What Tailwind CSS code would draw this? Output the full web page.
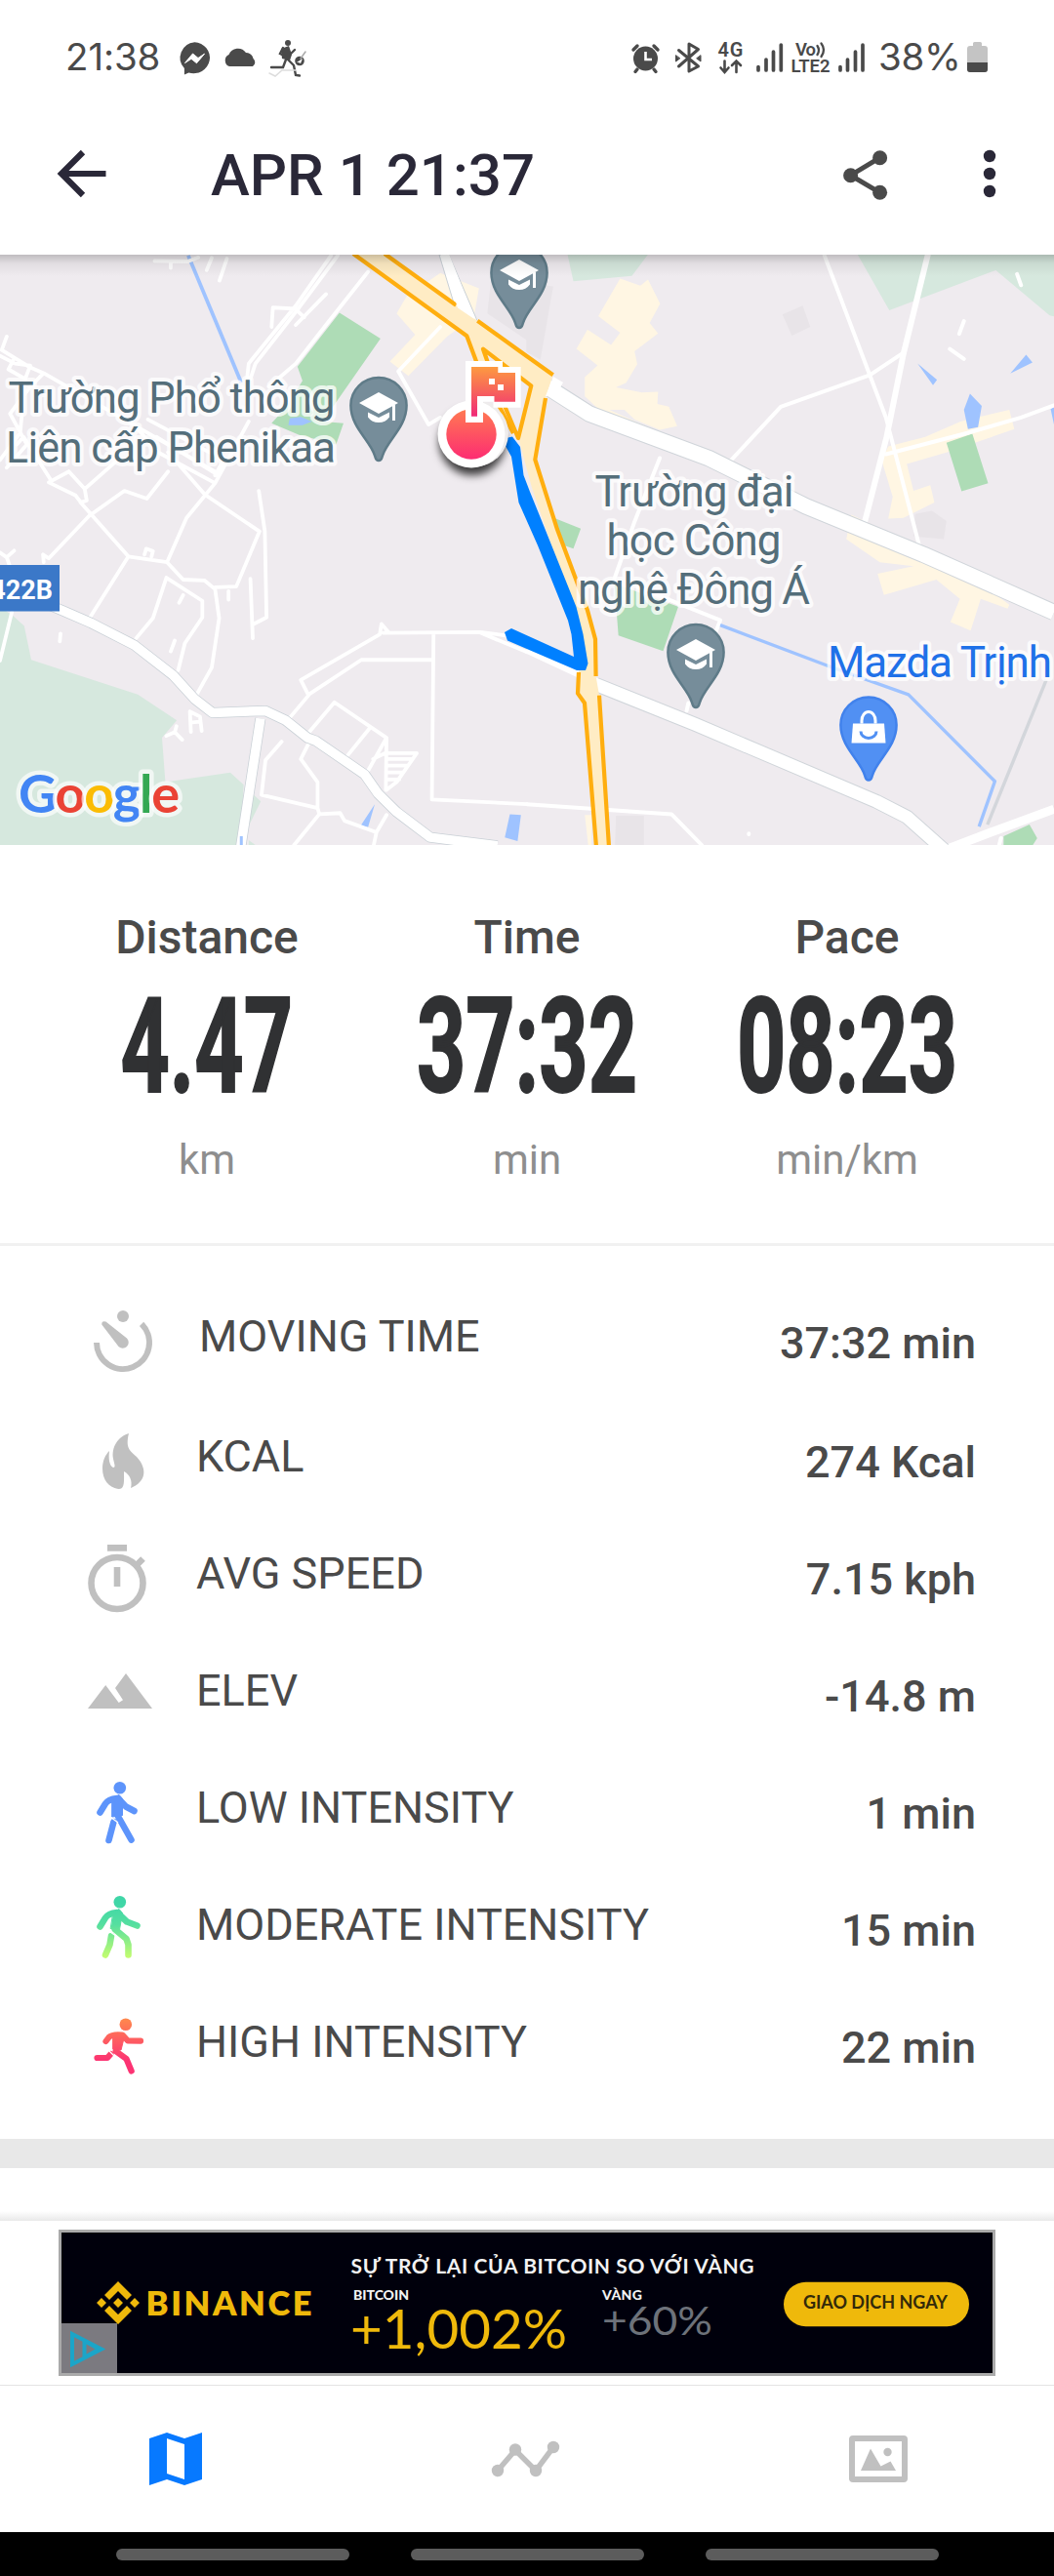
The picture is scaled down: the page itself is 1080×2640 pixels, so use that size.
<!DOCTYPE html>
<html lang="vi">
<head>
<meta charset="utf-8">
<title>APR 1 21:37</title>
<script src="https://cdn.jsdelivr.net/npm/@tailwindcss/browser@4"></script>
</head>
<body class="w-[1080px] h-[2640px] bg-white overflow-hidden flex flex-col font-['Roboto',sans-serif] text-[#4a4a4a]">

<!-- Status bar -->
<header class="h-[116px] shrink-0 flex items-start justify-between pl-[67px] pr-[68px]">
  <div class="flex items-start">
    <span class="w-[107px] pt-[34px] text-[38.5px] leading-[48px] tracking-[-0.1px] font-['Inter',sans-serif] whitespace-nowrap">21:38</span>
    <svg class="w-[150px] h-[116px]" viewBox="174 0 150 116">
      <g fill="#4a4a4a">
        <path d="M199.400 43.200a16.500 16 0 1 1-6 31.200l-4.500 2v-6.500a16.500 16 0 0 1 10.500-26.700z"/>
        <path d="M189.500 64.500l8-9.500 5.500 4.500 6.500-4.300-8 9.500-5.500-4.400z" fill="#fff" stroke="#fff" stroke-width="1"/>
        <path d="M235 68a6.500 6.500 0 0 1-.5-12 10 10 0 0 1 17.500-2 8 8 0 0 1 7.500 6 5 5 0 0 1-.5 8z"/>
        <circle cx="295" cy="44" r="3"/>
        <path d="M288 50l8-3 3 9-2 6-8-2z"/>
        <circle cx="307" cy="62.500" r="4.800"/>
        <path d="M304 64l6-4-2 5-2-1z" fill="#fff"/>
      </g>
      <g fill="none" stroke="#4a4a4a" stroke-width="2.400" stroke-linecap="round">
        <path d="M290 49l-3 6 6 3M298 55l4-4M293 61l-3 8-12 0M295 61l6 6 2 10 4 .5"/>
        <path d="M276 75l6 3 7-6h14" stroke="#ddd" stroke-width="1.500"/>
        <path d="M308 60l5-7" stroke="#aaa" stroke-width="1.500"/>
      </g>
    </svg>
  </div>
  <div class="flex items-start">
    <svg class="w-[254px] h-[116px]" viewBox="644 0 254 116">
      <g stroke="#4a4a4a" fill="none" stroke-width="3.400" stroke-linecap="round">
        <circle cx="661.500" cy="60" r="12.500" fill="#4a4a4a" stroke="none"/>
        <path d="M649 51l4-4M674 51l-4-4M653 71l-2 2.500M670 71l2 2.500"/>
        <path d="M661.500 53v8h6.500" stroke="#fff" stroke-width="2.600" stroke-linecap="butt"/>
        <path d="M695.500 51.500l20 16.500-9.500 5V45l9.500 5.500-20 17.500" stroke-linejoin="round" stroke-width="3"/>
        <path d="M692.500 57v6l4-3zM718 57v6l-4-3z" fill="#4a4a4a" stroke-width="1"/>
        <path d="M742.500 62.500v11m-4-4l4 4.500 4-4.500M754.500 74v-11m-4.500 4l4.500-4.500 4.500 4.500" stroke-width="2.600"/>
        <path d="M777 68.500v3.500M785 61v11M792.500 53v19M800.300 46v26" stroke-width="3.700"/>
        <path d="M861 68.500v3.500M868.500 61v11M876.500 53v19M884 46v26" stroke-width="3.700"/>
        <path d="M837.500 47q3 4.500 0 9M841.500 44.500q5 6.500 0 13.500" stroke-width="2.300"/>
      </g>
      <g fill="#4a4a4a" font-family="Roboto" font-weight="600" font-size="20">
        <text x="735.500" y="57.500" textLength="26">4G</text>
        <text x="815" y="57" font-size="18.500" textLength="21">Vo</text>
        <text x="810.500" y="74" font-size="18.500" textLength="40">LTE2</text>
      </g>
    </svg>
    <span class="w-[93px] pl-[2px] pt-[34px] text-[38.5px] leading-[48px] tracking-[-0.3px] font-['Inter',sans-serif] whitespace-nowrap">38%</span>
    <svg class="w-[21px] h-[31px] mt-[43px]" viewBox="0 0 21 31">
      <path d="M6 1.500Q6 0 7.500 0h6Q15 0 15 1.500V4h3q3 0 3 3v21q0 3-3 3H3q-3 0-3-3V7q0-3 3-3h3z" fill="#c4c4c4"/>
      <path d="M0 21h21v7q0 3-3 3H3q-3 0-3-3z" fill="#4a4a4a"/>
    </svg>
  </div>
</header>

<!-- App bar -->
<nav class="h-[145px] shrink-0 flex items-start bg-white">
  <svg class="w-[216px] h-[145px]" viewBox="0 116 216 145"><path d="M108.500 178H65M85 156l-22 22 22 22" fill="none" stroke="#2a2838" stroke-width="6.200"/></svg>
  <h1 class="w-[624px] pt-[28px] text-[60px] leading-[72px] font-medium text-[#2a2838] whitespace-nowrap">APR 1 21:37</h1>
  <svg class="w-[240px] h-[145px]" viewBox="840 116 240 145">
    <path d="M901.600 161.700l-30 18 30 17.600" fill="none" stroke="#4a4a4a" stroke-width="5"/>
    <g fill="#4a4a4a"><circle cx="871.600" cy="179.700" r="7.500"/><circle cx="901.600" cy="161.700" r="7.500"/><circle cx="901.600" cy="197.300" r="7.500"/></g>
    <g fill="#2a2838"><circle cx="1014" cy="160" r="6.200"/><circle cx="1014" cy="178" r="6.200"/><circle cx="1014" cy="196" r="6.200"/></g>
  </svg>
</nav>

<!-- Route map -->
<svg class="w-[1080px] h-[605px] shrink-0 block" viewBox="0 261 1080 605">
  <defs>
    <linearGradient id="shade" x1="0" y1="0" x2="0" y2="1"><stop offset="0" stop-color="#000" stop-opacity=".2"/><stop offset=".4" stop-color="#000" stop-opacity=".06"/><stop offset="1" stop-color="#000" stop-opacity="0"/></linearGradient>
    <linearGradient id="mark" x1="0" y1="0" x2="0" y2="1"><stop offset="0" stop-color="#ff7a52"/><stop offset="1" stop-color="#fd2c72"/></linearGradient>
    <linearGradient id="flag" x1="0" y1="0" x2="0" y2="1"><stop offset="0" stop-color="#fd9a40"/><stop offset="1" stop-color="#f02a78"/></linearGradient>
    <filter id="drop" x="-50%" y="-50%" width="200%" height="200%"><feGaussianBlur stdDeviation="4"/></filter>
    <path id="pin" d="M0 42C-3 42-3 39.500-4 37C-8 22-28.600 8-28.600-14.500A28.600 28.600 0 0 1 28.600-14.500C28.600 8 8 22 4 37C3 39.500 3 42 0 42z" stroke-width="2.500"/>
    <g id="cap" fill="#fff">
      <path d="M-20-17L0-28 20-17 0-6z"/><path d="M-11-7.500L0-2 11-7.500V-2.500Q7 3 0 3T-11-2.500z"/><path d="M14-15h3V1h-3z"/>
    </g>
  </defs>
  <rect y="261" width="1080" height="605" fill="#efebef"/>

  <!-- western half -->
  <g transform="translate(0 250) scale(.34439 .39541)" fill="none" stroke-linejoin="round">
    <g fill="#d6e8de">
      <path d="M0 940L40 965L72 990L93 1078L410 1168L526 1235L482 1280L492 1395L685 1370L725 1402L715 1558H0z"/>
      <path d="M745 1420L776 1445L742 1505zM740 1545l20 13h-20z"/>
    </g>
    <g fill="#aedcb6">
      <path d="M1010 178L1132 245L960 460L1022 465L1000 520L890 495L808 465L850 425L900 355L885 318z"/>
    </g>
    <path d="M858 470L862 452L895 448L928 460L900 470z" fill="#9fc3ff"/>
    <path d="M1210 135L1310 75L1425 115L1410 190L1330 240L1215 342L1160 305L1235 235L1180 180z" fill="#fff6e3"/>
    <path d="M1460 100L1568 110V250L1450 180z" fill="#e8e4e8"/>
    <path d="M1517 1478L1550 1480L1540 1548L1502 1538zM1073 1508L1115 1452L1095 1512z" fill="#9fc3ff"/>
    <path d="M560 30L718 360" stroke="#9fc3ff" vector-effect="non-scaling-stroke" stroke-width="3.800"/>
    <g stroke="#fff" stroke-width="3.800" stroke-linecap="round">
      <path vector-effect="non-scaling-stroke" d="M460 44L560 45L590 35M508 46v16M630 36L615 68M675 38L653 95M985 30L880 160L740 310L735 350M1005 30L890 165L760 310L745 350M1095 72L970 210L880 310L800 370M970 130L880 210M808 215L812 165L878 168L905 190M1310 215L1185 330L1275 468L1310 450"/>
      <path vector-effect="non-scaling-stroke" d="M20 240L5 275L90 320L130 335L400 470L640 590M0 290L45 310L90 315L75 350L25 325L40 300M130 335L90 370L30 440L80 520L20 580M75 350L60 490L0 560M440 455L665 560L640 600M400 470L470 540L640 620M465 500L650 600M500 540L610 650L772 745M50 520L70 500L150 610M205 590L145 618L225 652L245 675M205 590L252 635L258 665L240 670M252 635L350 560M500 590L437 660L370 640L265 705L145 815L128 805L130 825M240 670L382 810L270 965M770 640L788 745L793 968L755 985M745 868L752 1022M772 745L703 888L640 890M740 460L640 620L555 710L497 825L382 810M430 805l5-15 20 6-4 14M497 825L545 870L608 872L640 895L652 970L630 1098L585 1168M405 1022L455 970L495 865L602 925V968L550 1035L530 1105M545 910l-12 20M680 900v22M180 1010l-2 20M520 1028l-12 28M35 955L0 1080M0 800L20 812L42 795M20 812L35 850"/>
      <path vector-effect="non-scaling-stroke" d="M865 1225L918 1170L895 1130L1130 1012L1135 985L1155 1005M918 1168L1075 1078H1285M1140 1008L1430 1006L1505 1015M1430 1008L1568 1058M1290 1010L1285 1440L1568 1452M920 1265L995 1188L1150 1280L1148 1415M1150 1280L1092 1370M1100 1255L1035 1325M1110 1335L1145 1320L1240 1320L1180 1395L1150 1415M1150 1335H1225M1150 1352H1212M1150 1370H1200M1150 1388H1188M838 1290L790 1338L778 1428L945 1462V1395L895 1335L918 1295M945 1462L950 1478L875 1558M950 1478L1012 1475L1025 1495L1120 1525L1150 1480M1120 1525L1112 1558M565 1212L568 1265M565 1212L595 1225L600 1262M572 1240L595 1238M495 1275L520 1265L525 1250M520 1265L542 1285"/>
    </g>
    <path stroke="#c9d0d6" vector-effect="non-scaling-stroke" stroke-width="11" d="M130 930L185 950L270 982L400 1040L515 1118L580 1180L632 1215L790 1210L850 1235L915 1280L940 1288L1085 1375L1125 1425L1180 1472L1280 1538L1480 1560M775 1230L715 1570"/>
    <path stroke="#fff" vector-effect="non-scaling-stroke" stroke-width="9.500" d="M130 930L185 950L270 982L400 1040L515 1118L580 1180L632 1215L790 1210L850 1235L915 1280L940 1288L1085 1375L1125 1425L1180 1472L1280 1538L1480 1560M775 1230L715 1570"/>
    <path vector-effect="non-scaling-stroke" d="M718 1535v23" stroke="#9fc3ff" stroke-width="3"/>
  </g>

  <!-- eastern half -->
  <g transform="translate(540 250) scale(.34439 .39541)" fill="none" stroke-linejoin="round">
    <g fill="#d6e8de"><path d="M120 25H362L312 83L138 97zM982 25H1568V188L1555 185L1395 68L1078 172z"/></g>
    <g fill="#fff6e3">
      <path d="M277 90L337 108L360 92L396 155L365 205L390 232L320 278L328 312L295 360L265 372L342 385L390 383L388 415L422 422L447 472L395 482L320 455L290 430L245 430L378 482L372 488L215 430L172 395V345L210 315L147 272L180 222L250 262L277 230L212 187z"/>
      <path d="M1075 525L1185 500L1290 460L1435 430L1450 480L1250 540L1130 570L1150 640L1200 625L1212 670L1120 710L1075 712L1088 655L1055 560zM965 702L1045 735L1150 790L1300 850L1435 935L1430 945L1350 920L1320 1002L1260 980L1288 920L1218 870L1062 910L1043 855L1150 835L1050 825L950 765z"/>
      <path d="M172 1480h20v78h-10z"/>
    </g>
    <g fill="#e8e4e8"><path d="M760 183L820 160L843 215L788 238zM1155 700L1205 692L1248 718L1240 765L1150 758zM265 1482H348V1558H262zM-2 100L78 110L40 300L-2 280z"/></g>
    <g fill="#aedcb6"><path d="M1248 515L1325 492L1372 620L1293 641zM80 710L160 738L138 790L100 778zM260 880L450 940L405 1055L272 1015zM1418 1535L1495 1505L1518 1540L1505 1558H1418z"/></g>
    <g fill="#9fc3ff"><path d="M1318 388L1353 420L1342 475L1312 480L1300 430zM1162 310L1220 352L1208 366zM1438 336L1485 287L1504 307zM1558 428l10-5v45z"/></g>
    <g stroke="#fff" stroke-linecap="round">
      <path vector-effect="non-scaling-stroke" stroke-width="4" d="M885 30L1020 340L1068 450L1168 785M1115 285L1020 340L755 422L595 572M1068 545L1310 490L1470 450L1568 418M395 555L320 720L255 880M330 890L575 975L560 1010M480 1190L475 1210M0 1452L430 1478L520 1558M1458 78L1470 107M1300 200L1286 233M1258 272L1300 298M1410 1540l-5 18M660 1528v2"/>
      <path vector-effect="non-scaling-stroke" stroke-width="6" d="M1192 30L1120 285L1070 500L1005 720"/>
    </g>
    <path vector-effect="non-scaling-stroke" d="M575 988L900 1095L1135 1168L1392 1393L1345 1510" stroke="#9fc3ff" stroke-width="3.400"/>
    <path vector-effect="non-scaling-stroke" d="M1545 1130L1370 1505" stroke="#d3d6db" stroke-width="3.400"/>
    <path vector-effect="non-scaling-stroke" d="M60 370L185 440L540 555L830 680L1180 805L1568 955" stroke="#d0d5da" stroke-width="17.500"/>
    <path vector-effect="non-scaling-stroke" d="M1568 1465L1380 1525L1230 1575" stroke="#fff" stroke-width="9"/>
    <path vector-effect="non-scaling-stroke" d="M205 1142L500 1245L1040 1445L1130 1485L1240 1570" stroke="#d0d5da" stroke-width="15"/>
    <path vector-effect="non-scaling-stroke" d="M55 368L185 440L540 555L830 680L1180 805L1568 955" stroke="#fff" stroke-width="15.500"/>
    <path vector-effect="non-scaling-stroke" d="M195 1138L500 1245L1040 1445L1130 1485L1240 1570" stroke="#fff" stroke-width="13"/>
    <path vector-effect="non-scaling-stroke" d="M0 1050L160 1115" stroke="#fff" stroke-width="9"/>
  </g>

  <!-- highway -->
  <path d="M450 261h10L490 331L466 314z" fill="#fff" stroke="#c9d0d6" stroke-width="1"/>
  <g stroke-linejoin="round">
    <path d="M363 261L478.300 344.300L489 373L530 444L545 500L593 640L593 689L592 710.600L599 720.500L611 868H624L614 712.600L610.600 693L610 655L602 625.600L571 542.600L548.300 471L559 408L566.700 384.300L531.700 359.300L489.300 328.700L467.300 312.700L395 261z" fill="#ffecc4"/>
    <path d="M362 260L478.300 344.300L489 373L526 444M394 260L467.300 312.700M489.300 328.700L531.700 359.300L566.700 384.300M559 408L548.300 471L571 542.600L602 625.600L610 655L610.600 693M614 712.600L624 868M593 689L592 710.600L599 720.500L611 868" fill="none" stroke="#ffae0f" stroke-width="4.200"/>
    <path d="M495 357.700L544.300 395.300L531 449L507 392z" fill="#efebef" stroke="#ffae0f" stroke-width="4.200"/>
    <path d="M451.500 261h9L486 327L469 315.500z" fill="#fff"/>
    <path d="M559 406l8-20 10 6-8 14z" fill="#fff"/>
  </g>

  <path d="M514 450L525 447.500L533 458L536.500 487L543 504L558 541L590.500 622L597.500 650L602.500 680L600 687H591L520 656.500L517 648L524 644L588 673L585.500 650L582 636L551 559L531.500 515L524 468z" fill="#0080ff"/>

  <!-- place pins -->
  <g transform="translate(388 430)"><use href="#pin" fill="#768d9a" stroke="#5f7b88"/><use href="#cap"/></g>
  <g transform="translate(532 294)"><use href="#pin" fill="#768d9a" stroke="#5f7b88"/><use href="#cap"/></g>
  <g transform="translate(713 683)"><use href="#pin" fill="#768d9a" stroke="#5f7b88"/><use href="#cap"/></g>
  <g transform="translate(890 757.500)"><use href="#pin" fill="#5190f3" stroke="#4182ec"/>
    <path d="M-16-16h32l1.500 20h-35z" fill="#fff"/><path d="M-7-16v-3a7 9 0 0 1 14 0v3" fill="none" stroke="#fff" stroke-width="3"/><path d="M-8-8a8 7 0 0 0 16 0" fill="none" stroke="#5190f3" stroke-width="3"/>
  </g>

  <!-- labels -->
  <g font-family="Roboto" font-size="44" fill="#546e7a" stroke="#fff" stroke-opacity=".75" stroke-width="8" stroke-linejoin="round" paint-order="stroke">
    <text x="8.500" y="423" textLength="335">Trường Phổ thông</text>
    <text x="6" y="474" textLength="338">Liên cấp Phenikaa</text>
    <text x="609.500" y="519" textLength="204">Trường đại</text>
    <text x="621.500" y="569" textLength="179">học Công</text>
    <text x="592" y="619" textLength="238">nghệ Đông Á</text>
    <text x="848" y="694" textLength="230" fill="#1f71e8">Mazda Trịnh</text>
  </g>
  <rect x="-10" y="579" width="71" height="47.500" fill="#3b78c8"/>
  <text x="54" y="614" text-anchor="end" font-family="Roboto" font-weight="700" font-size="27" fill="#fff">422B</text>
  <text x="19" y="832.500" textLength="165" font-family="Lato" font-weight="700" font-size="54" stroke="#fff" stroke-opacity=".65" stroke-width="9" stroke-linejoin="round" paint-order="stroke"><tspan fill="#4285f4">G</tspan><tspan fill="#ea4335">o</tspan><tspan fill="#fbbc05">o</tspan><tspan fill="#4285f4">g</tspan><tspan fill="#34a853">l</tspan><tspan fill="#ea4335">e</tspan></text>

  <!-- start / finish marker -->
  <circle cx="484" cy="453" r="34" fill="#000" fill-opacity=".75" filter="url(#drop)"/>
  <circle cx="487" cy="444" r="34" fill="#eeecec"/>
  <circle cx="483" cy="445" r="34.500" fill="#fff"/>
  <circle cx="483" cy="445" r="25.700" fill="url(#mark)"/>
  <path d="M477 370h38v6h18.700v41.700H505.500v-6H495v21.300h-18z" fill="#fff"/>
  <path d="M483 376h27.300v6H528v29.700h-21.500v-5.700H489v20.700h-6z" fill="url(#flag)"/>
  <path d="M501 388h6v6h-6zM510 394h6v6h-6z" fill="#fff"/>
  <rect y="261" width="1080" height="22" fill="url(#shade)"/>
</svg>

<!-- Headline stats -->
<section class="h-[411px] shrink-0 border-b-[3px] border-[#f1f1f1] px-[48px] grid grid-cols-3 text-center">
  <div class="flex flex-col items-center pt-[67px]">
    <h2 class="text-[48px] leading-[56px] font-medium">Distance</h2>
    <p class="mt-[24px] h-[120px] text-[135px] leading-[120px] font-bold text-[#303133] scale-x-[.65] whitespace-nowrap [-webkit-text-stroke:2px_#303133]">4.47</p>
    <p class="mt-[31px] text-[42px] leading-[50px] text-[#8e8e8e]">km</p>
  </div>
  <div class="flex flex-col items-center pt-[67px]">
    <h2 class="text-[48px] leading-[56px] font-medium">Time</h2>
    <p class="mt-[24px] h-[120px] text-[135px] leading-[120px] font-bold text-[#303133] scale-x-[.65] whitespace-nowrap [-webkit-text-stroke:2px_#303133]">37:32</p>
    <p class="mt-[31px] text-[42px] leading-[50px] text-[#8e8e8e]">min</p>
  </div>
  <div class="flex flex-col items-center pt-[67px]">
    <h2 class="text-[48px] leading-[56px] font-medium">Pace</h2>
    <p class="mt-[24px] h-[120px] text-[135px] leading-[120px] font-bold text-[#303133] scale-x-[.65] whitespace-nowrap [-webkit-text-stroke:2px_#303133]">08:23</p>
    <p class="mt-[31px] text-[42px] leading-[50px] text-[#8e8e8e]">min/km</p>
  </div>
</section>

<!-- Detail rows -->
<section class="h-[915px] shrink-0 pt-[46px] pl-[84px] pr-[80px] text-[45px] leading-[60px]">
  <div class="h-[123px] flex items-start">
    <svg class="w-[84px] h-[120px]" viewBox="84 1323 84 120"><path d="M99 1376a27 27 0 1 0 46.100-19.100" fill="none" stroke="#c0c0c0" stroke-width="6"/><circle cx="126" cy="1349" r="6" fill="#c0c0c0"/><path d="M104.300 1357.500Q104 1353 108.500 1354.500L130 1371.500A6 6 0 0 1 121.500 1380z" fill="#c0c0c0"/></svg>
    <span class="pt-[17px] pl-[36px] flex-1">MOVING TIME</span><span class="pt-[24px] font-medium">37:32 min</span>
  </div>
  <div class="h-[120px] flex items-start">
    <svg class="w-[84px] h-[120px]" viewBox="84 1446 84 120"><path d="M132 1469C128 1485 134 1487 140 1493C152 1506 149 1519 134 1525C136 1518 133 1511 127 1508C127 1517 128 1526 122 1526C111 1525 105 1516 105 1505C105 1497 108 1491 112 1487C111 1495 112 1502 116 1504C119 1504 117 1500 116 1495C114 1483 121 1472 132 1469z" fill="#c0c0c0"/></svg>
    <span class="pt-[17px] pl-[33px] flex-1">KCAL</span><span class="pt-[23px] font-medium">274 Kcal</span>
  </div>
  <div class="h-[120px] flex items-start">
    <svg class="w-[84px] h-[120px]" viewBox="84 1566 84 120"><g fill="none" stroke="#c0c0c0" stroke-width="6.600"><circle cx="120" cy="1622.500" r="26.500"/><path d="M110 1586.400h20M120 1606v20M139 1605l7.500-7.500"/></g></svg>
    <span class="pt-[17px] pl-[33px] flex-1">AVG SPEED</span><span class="pt-[23px] font-medium">7.15 kph</span>
  </div>
  <div class="h-[120px] flex items-start">
    <svg class="w-[84px] h-[120px]" viewBox="84 1686 84 120"><path d="M90 1751L108.200 1727L121.700 1745L126 1742.300L118 1730L129 1715L156 1751z" fill="#c0c0c0"/></svg>
    <span class="pt-[17px] pl-[33px] flex-1">ELEV</span><span class="pt-[23px] font-medium">-14.8 m</span>
  </div>
  <div class="h-[120px] flex items-start">
    <svg class="w-[84px] h-[120px]" viewBox="84 1806 84 120"><g fill="none" stroke="#5d94fb" stroke-width="6.600" stroke-linecap="round" stroke-linejoin="round"><circle cx="122.800" cy="1832.200" r="6.300" fill="#5d94fb" stroke="none"/><path d="M115 1844l7-4.500 3.500 4v17L115 1862z" fill="#5d94fb" stroke-width="1"/><path d="M120 1843q-9 1-12 5.500l-5.500 9M121 1843l8 8.500 8.500 4.500M120.500 1846l.5 15.500 13.500 24"/><path d="M116.500 1867l-5 19"/></g><path d="M113 1862l8 6" stroke="#fff" stroke-width="1.300"/></svg>
    <span class="pt-[17px] pl-[33px] flex-1">LOW INTENSITY</span><span class="pt-[23px] font-medium">1 min</span>
  </div>
  <div class="h-[120px] flex items-start">
    <svg class="w-[84px] h-[120px]" viewBox="84 1926 84 120"><defs><linearGradient id="mod" gradientUnits="userSpaceOnUse" x1="0" y1="1950" x2="0" y2="2006"><stop offset="0" stop-color="#3fd6a7"/><stop offset=".4" stop-color="#55dfa0"/><stop offset="1" stop-color="#c3fc6f"/></linearGradient></defs><g fill="none" stroke="url(#mod)" stroke-width="6.600" stroke-linecap="round" stroke-linejoin="round"><circle cx="122.800" cy="1949.200" r="6.300" fill="url(#mod)" stroke="none"/><path d="M116 1961l6-4.500 3.500 4-3 17-9-1z" fill="url(#mod)" stroke-width="1"/><path d="M120 1960q-9 1-12 5.500l-5.500 9M121 1961l9 8.500 10.500 4M120.500 1963l-3 14 12 10 2 6v10.500"/><path d="M114 1984l-1.500 9-4.500 10.500"/></g><path d="M110 1978l9 6" stroke="#fff" stroke-width="1.300"/></svg>
    <span class="pt-[17px] pl-[33px] flex-1">MODERATE INTENSITY</span><span class="pt-[23px] font-medium">15 min</span>
  </div>
  <div class="h-[120px] flex items-start">
    <svg class="w-[84px] h-[120px]" viewBox="84 2046 84 120"><defs><linearGradient id="high" gradientUnits="userSpaceOnUse" x1="0" y1="2068" x2="0" y2="2112"><stop offset="0" stop-color="#ff8a4c"/><stop offset="1" stop-color="#fc3373"/></linearGradient></defs><g fill="none" stroke="url(#high)" stroke-width="6.200" stroke-linecap="round" stroke-linejoin="round"><circle cx="128.800" cy="2074.700" r="6.300" fill="url(#high)" stroke="none"/><path d="M116 2084l12 1-4 16-8-1z" fill="url(#high)" stroke-width="1"/><path d="M125 2085.500q-10-1-13.500 2.500l-3 4M126 2086l5 5.500 13 .200M124 2088l-5.500 14 11 8 5.200 12.500"/><path d="M113.500 2105l-3.500 4H99.500"/></g><path d="M111 2101l7 7" stroke="#fff" stroke-width="1.300"/></svg>
    <span class="pt-[17px] pl-[33px] flex-1">HIGH INTENSITY</span><span class="pt-[23px] font-medium">22 min</span>
  </div>
</section>

<div class="h-[30px] shrink-0 bg-[#e8e8e8]"></div>
<div class="h-[54px] shrink-0 flex items-end"><div class="h-[10px] w-full bg-linear-to-b from-white to-[#e9e9e9]"></div></div>

<!-- Ad banner -->
<aside class="h-[168px] shrink-0 px-[60px] pt-[9px]">
  <svg class="w-[960px] h-[150px]" viewBox="60 2285 960 150" font-family="Lato">
    <rect x="60" y="2285" width="960" height="150" fill="#aaa"/>
    <rect x="63" y="2288" width="954" height="144" fill="#00000c"/>
    <g fill="#efb90b">
      <path d="M121 2338l14 14-5 5-9-9-9 9-5-5zM121 2382l14-14-5-5-9 9-9-9-5 5zM121 2355l5 5-5 5-5-5zM104 2355l5 5-5 5-5-5zM138 2355l5 5-5 5-5-5z"/>
      <text x="149.500" y="2372.500" font-size="34.500" font-weight="800" textLength="170">BINANCE</text>
      <text x="359" y="2407" font-size="56" font-weight="400" textLength="222" lengthAdjust="spacingAndGlyphs">+1,002%</text>
    </g>
    <g fill="#f2f2f2" font-weight="700">
      <text x="359.500" y="2330" font-size="21" textLength="413">SỰ TRỞ LẠI CỦA BITCOIN SO VỚI VÀNG</text>
      <text x="362" y="2357" font-size="14" font-weight="900" textLength="57">BITCOIN</text>
      <text x="617" y="2357" font-size="14" font-weight="900" textLength="41">VÀNG</text>
    </g>
    <text x="617" y="2393" font-size="41.500" font-weight="400" fill="#6d727a" textLength="113" lengthAdjust="spacingAndGlyphs">+60%</text>
    <rect x="803" y="2338.700" width="190" height="45.500" rx="22.700" fill="#efb90b"/>
    <text x="823" y="2366" font-size="18" font-weight="700" fill="#332a0a" textLength="148">GIAO DỊCH NGAY</text>
    <rect x="63" y="2381" width="57" height="51" fill="#7b7a80"/>
    <path d="M74 2392v31l30-15.500zM86.500 2399v17l15-8.500z" fill="none" stroke="#1ba5c8" stroke-width="4"/>
  </svg>
</aside>

<!-- Bottom tabs -->
<footer class="h-[151px] shrink-0 border-t border-[#e4e4e4]">
  <div class="h-[150px] flex">
    <svg class="w-[360px] h-[150px]" viewBox="0 2445 360 150"><path d="M153 2499L171 2493L189 2499L207 2493V2541L189 2547L171 2541L153 2547zM171 2499V2535L189 2541V2505z" fill="#0779ff" fill-rule="evenodd"/></svg>
    <svg class="w-[360px] h-[150px]" viewBox="360 2445 360 150"><path d="M510 2532L528 2511L549 2532L567 2508" fill="none" stroke="#c0c0c0" stroke-width="5.500"/><g fill="#c0c0c0"><circle cx="510" cy="2532" r="6.200"/><circle cx="528" cy="2510.500" r="6.200"/><circle cx="549" cy="2532" r="6.200"/><circle cx="567" cy="2508" r="6.200"/></g></svg>
    <svg class="w-[360px] h-[150px]" viewBox="720 2445 360 150"><rect x="873" y="2499" width="54" height="42" rx="1" fill="none" stroke="#c0c0c0" stroke-width="6"/><circle cx="909.500" cy="2513" r="4.200" fill="#c0c0c0"/><path d="M882 2532L892 2509.500L902.500 2527.500L912.500 2522.500L918 2532z" fill="#c0c0c0"/></svg>
  </div>
</footer>

<!-- System navigation -->
<div class="h-[45px] shrink-0 bg-black flex items-start justify-center gap-[63px] pt-[17px]">
  <div class="w-[239px] h-[12px] rounded-full bg-[#5c5c5c]"></div>
  <div class="w-[239px] h-[12px] rounded-full bg-[#5c5c5c]"></div>
  <div class="w-[239px] h-[12px] rounded-full bg-[#5c5c5c]"></div>
</div>
</body>
</html>
